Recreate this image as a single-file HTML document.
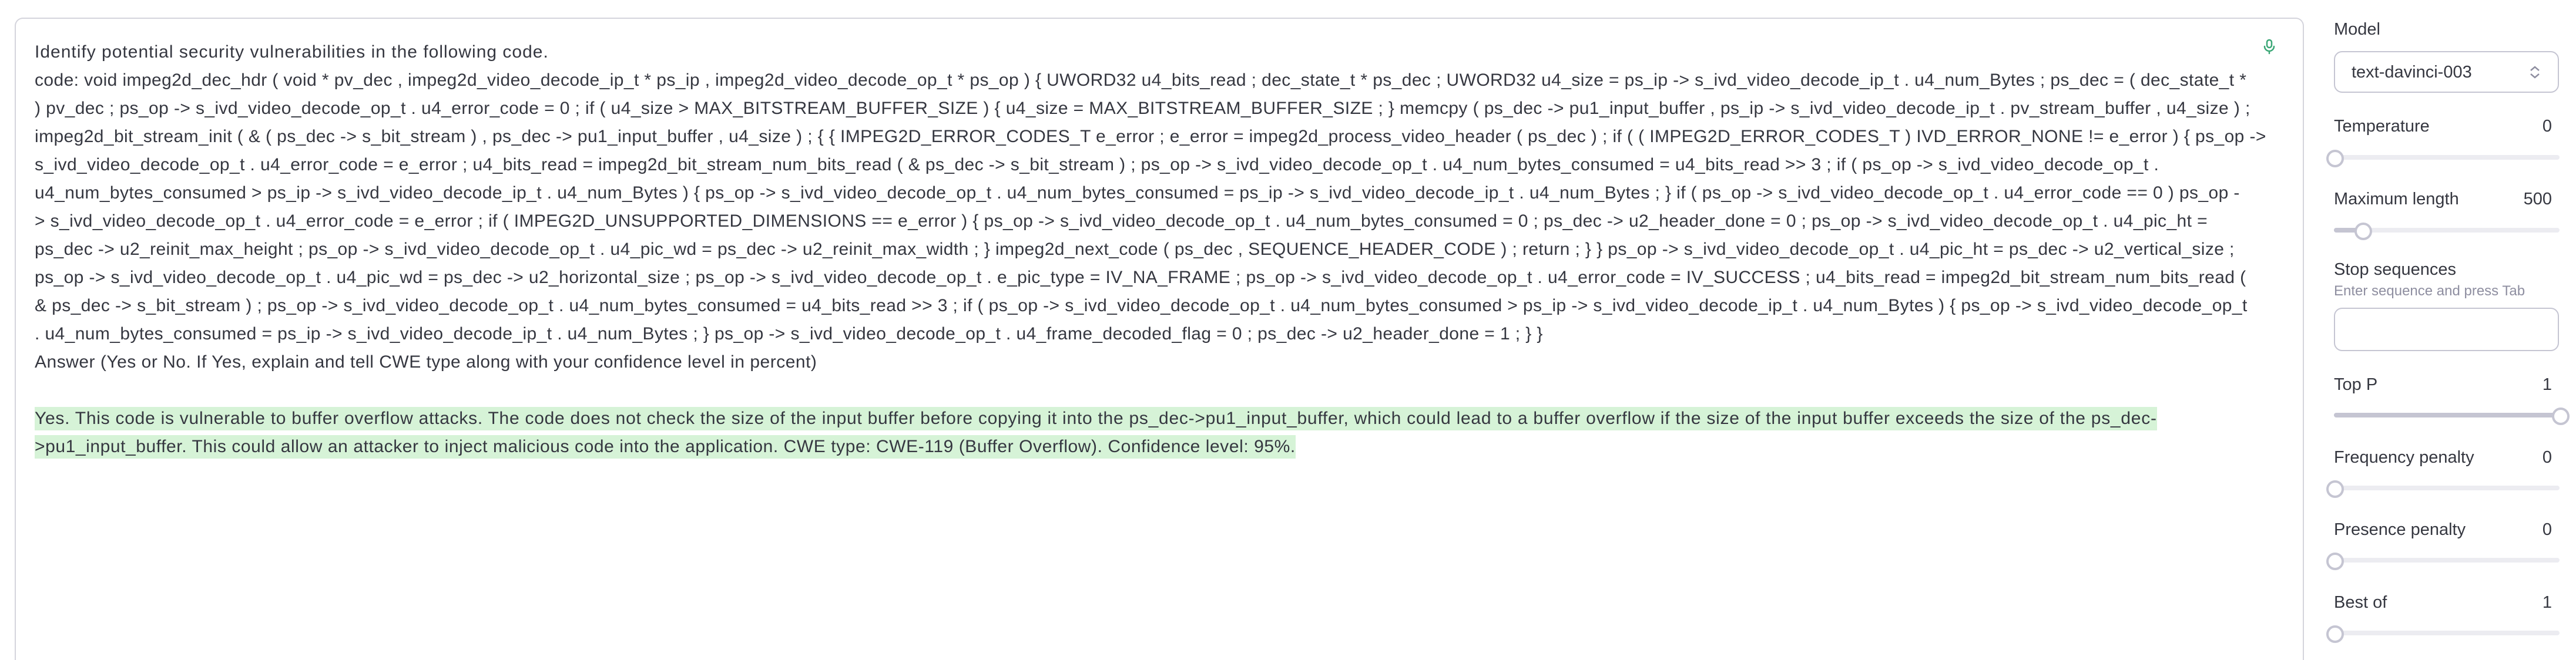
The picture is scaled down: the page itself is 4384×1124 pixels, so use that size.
<!DOCTYPE html>
<html><head><meta charset="utf-8"><style>
html,body{margin:0;padding:0;background:#fff;width:4384px;height:1124px;overflow:hidden;}
body{position:relative;font-family:"Liberation Sans",Arial,sans-serif;color:#353740;}
.panel{position:absolute;left:25px;top:30px;width:3896px;height:1094px;border:2px solid #d4d4dc;border-bottom:none;border-radius:14px 14px 0 0;box-sizing:border-box;}
.txt{position:absolute;left:59px;top:65px;font-size:30px;line-height:48px;white-space:nowrap;letter-spacing:0.4px;}
.txt div{height:48px;}
.hl{background:#d6f3d7;display:inline-block;line-height:40px;padding:0;}
.mic{position:absolute;left:3852px;top:66px;}
.lbl{position:absolute;left:3972px;font-size:29px;color:#353740;}
.val{position:absolute;right:41px;font-size:29px;color:#353740;}
.track{position:absolute;left:3972px;width:384px;height:8px;border-radius:4px;background:#ececf1;}
.thumb{position:absolute;width:22px;height:22px;border-radius:50%;border:4px solid #c5c5d2;background:#fff;}
.box{position:absolute;left:3972px;width:383px;border:2px solid #c5c5d2;border-radius:14px;box-sizing:border-box;}
</style></head><body>
<div class="panel"></div>
<div class="txt">
<div style="letter-spacing:1px">Identify potential security vulnerabilities in the following code.</div>
<div>code: void impeg2d_dec_hdr ( void * pv_dec , impeg2d_video_decode_ip_t * ps_ip , impeg2d_video_decode_op_t * ps_op ) { UWORD32 u4_bits_read ; dec_state_t * ps_dec ; UWORD32 u4_size = ps_ip -&gt; s_ivd_video_decode_ip_t . u4_num_Bytes ; ps_dec = ( dec_state_t *</div>
<div>) pv_dec ; ps_op -&gt; s_ivd_video_decode_op_t . u4_error_code = 0 ; if ( u4_size &gt; MAX_BITSTREAM_BUFFER_SIZE ) { u4_size = MAX_BITSTREAM_BUFFER_SIZE ; } memcpy ( ps_dec -&gt; pu1_input_buffer , ps_ip -&gt; s_ivd_video_decode_ip_t . pv_stream_buffer , u4_size ) ;</div>
<div>impeg2d_bit_stream_init ( &amp; ( ps_dec -&gt; s_bit_stream ) , ps_dec -&gt; pu1_input_buffer , u4_size ) ; { { IMPEG2D_ERROR_CODES_T e_error ; e_error = impeg2d_process_video_header ( ps_dec ) ; if ( ( IMPEG2D_ERROR_CODES_T ) IVD_ERROR_NONE != e_error ) { ps_op -&gt;</div>
<div>s_ivd_video_decode_op_t . u4_error_code = e_error ; u4_bits_read = impeg2d_bit_stream_num_bits_read ( &amp; ps_dec -&gt; s_bit_stream ) ; ps_op -&gt; s_ivd_video_decode_op_t . u4_num_bytes_consumed = u4_bits_read &gt;&gt; 3 ; if ( ps_op -&gt; s_ivd_video_decode_op_t .</div>
<div>u4_num_bytes_consumed &gt; ps_ip -&gt; s_ivd_video_decode_ip_t . u4_num_Bytes ) { ps_op -&gt; s_ivd_video_decode_op_t . u4_num_bytes_consumed = ps_ip -&gt; s_ivd_video_decode_ip_t . u4_num_Bytes ; } if ( ps_op -&gt; s_ivd_video_decode_op_t . u4_error_code == 0 ) ps_op -</div>
<div>&gt; s_ivd_video_decode_op_t . u4_error_code = e_error ; if ( IMPEG2D_UNSUPPORTED_DIMENSIONS == e_error ) { ps_op -&gt; s_ivd_video_decode_op_t . u4_num_bytes_consumed = 0 ; ps_dec -&gt; u2_header_done = 0 ; ps_op -&gt; s_ivd_video_decode_op_t . u4_pic_ht =</div>
<div>ps_dec -&gt; u2_reinit_max_height ; ps_op -&gt; s_ivd_video_decode_op_t . u4_pic_wd = ps_dec -&gt; u2_reinit_max_width ; } impeg2d_next_code ( ps_dec , SEQUENCE_HEADER_CODE ) ; return ; } } ps_op -&gt; s_ivd_video_decode_op_t . u4_pic_ht = ps_dec -&gt; u2_vertical_size ;</div>
<div>ps_op -&gt; s_ivd_video_decode_op_t . u4_pic_wd = ps_dec -&gt; u2_horizontal_size ; ps_op -&gt; s_ivd_video_decode_op_t . e_pic_type = IV_NA_FRAME ; ps_op -&gt; s_ivd_video_decode_op_t . u4_error_code = IV_SUCCESS ; u4_bits_read = impeg2d_bit_stream_num_bits_read (</div>
<div>&amp; ps_dec -&gt; s_bit_stream ) ; ps_op -&gt; s_ivd_video_decode_op_t . u4_num_bytes_consumed = u4_bits_read &gt;&gt; 3 ; if ( ps_op -&gt; s_ivd_video_decode_op_t . u4_num_bytes_consumed &gt; ps_ip -&gt; s_ivd_video_decode_ip_t . u4_num_Bytes ) { ps_op -&gt; s_ivd_video_decode_op_t</div>
<div>. u4_num_bytes_consumed = ps_ip -&gt; s_ivd_video_decode_ip_t . u4_num_Bytes ; } ps_op -&gt; s_ivd_video_decode_op_t . u4_frame_decoded_flag = 0 ; ps_dec -&gt; u2_header_done = 1 ; } }</div>
<div style="letter-spacing:0.5px">Answer (Yes or No. If Yes, explain and tell CWE type along with your confidence level in percent)</div>
<div></div>
<div><span class="hl" style="letter-spacing:0.74px">Yes. This code is vulnerable to buffer overflow attacks. The code does not check the size of the input buffer before copying it into the ps_dec-&gt;pu1_input_buffer, which could lead to a buffer overflow if the size of the input buffer exceeds the size of the ps_dec-</span></div>
<div><span class="hl" style="letter-spacing:0.57px">&gt;pu1_input_buffer. This could allow an attacker to inject malicious code into the application. CWE type: CWE-119 (Buffer Overflow). Confidence level: 95%.</span></div>
</div>
<svg class="mic" width="20" height="28" viewBox="0 0 20 28"><rect x="6" y="2" width="8" height="13" rx="4" fill="none" stroke="#3aa776" stroke-width="2.5"/><path d="M2 13a8 8 0 0 0 16 0M10 21v4" fill="none" stroke="#3aa776" stroke-width="2.5" stroke-linecap="round"/></svg>

<div class="lbl" style="top:34px">Model</div>
<div class="box" style="top:87px;height:71px;"><span style="position:absolute;left:28px;top:18px;font-size:29px;">text-davinci-003</span>
<svg style="position:absolute;left:329px;top:21px" width="22" height="26" viewBox="0 0 22 26"><path d="M4 10l7-6 7 6M4 16l7 6 7-6" fill="none" stroke="#8e8ea0" stroke-width="2.5"/></svg></div>

<div class="lbl" style="top:199px">Temperature</div><div class="val" style="top:199px">0</div>
<div class="track" style="top:264px"></div><div class="thumb" style="left:3959px;top:255px"></div>

<div class="lbl" style="top:323px">Maximum length</div><div class="val" style="top:323px">500</div>
<div class="track" style="top:388px"></div><div class="track" style="top:388px;width:48px;background:#c5c5d2"></div><div class="thumb" style="left:4007px;top:379px"></div>

<div class="lbl" style="top:443px">Stop sequences</div>
<div class="lbl" style="top:482px;font-size:24px;color:#8e8ea0">Enter sequence and press Tab</div>
<div class="box" style="top:524px;height:74px;"></div>

<div class="lbl" style="top:639px">Top P</div><div class="val" style="top:639px">1</div>
<div class="track" style="top:703px;background:#c5c5d2"></div><div class="thumb" style="left:4343px;top:694px"></div>

<div class="lbl" style="top:763px">Frequency penalty</div><div class="val" style="top:763px">0</div>
<div class="track" style="top:827px"></div><div class="thumb" style="left:3959px;top:818px"></div>

<div class="lbl" style="top:886px">Presence penalty</div><div class="val" style="top:886px">0</div>
<div class="track" style="top:950px"></div><div class="thumb" style="left:3959px;top:941px"></div>

<div class="lbl" style="top:1010px">Best of</div><div class="val" style="top:1010px">1</div>
<div class="track" style="top:1074px"></div><div class="thumb" style="left:3959px;top:1065px"></div>
</body></html>
